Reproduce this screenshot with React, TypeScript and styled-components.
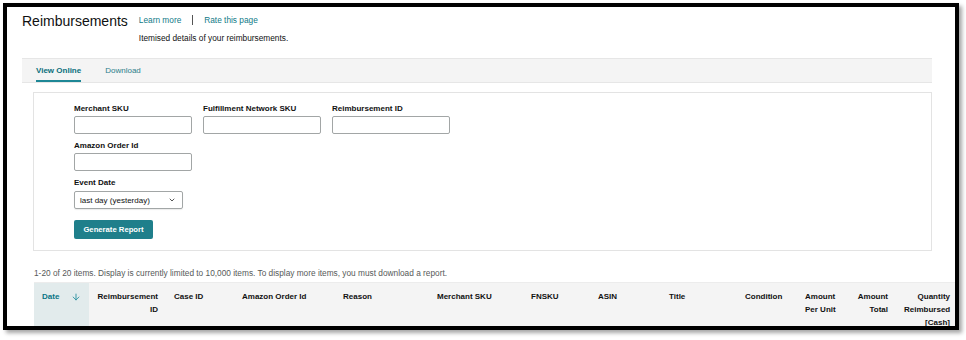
import styled, { createGlobalStyle } from "styled-components";
import { ArrowDown, ChevronDown } from "lucide-react";

const GlobalStyle = createGlobalStyle`
  html, body {
    margin: 0;
    padding: 0;
    background: #fff;
  }
  body {
    font-family: "Liberation Sans", Arial, sans-serif;
    color: #0f1111;
  }
`;

const Screen = styled.div`
  width: 966px;
  height: 340px;
  padding: 3px 0 0 3px;
  box-sizing: border-box;
  background: #fff;
  overflow: hidden;
`;

const Frame = styled.div`
  width: 956px;
  height: 327px;
  box-sizing: border-box;
  border: 4px solid #000;
  box-shadow: 3px 3px 4px rgba(0, 0, 0, 0.35);
  overflow: hidden;
  background: #fff;
`;

const Page = styled.div`
  padding: 7px 0 0 15px;
`;

const Header = styled.header`
  display: flex;
  align-items: flex-start;
`;

const Title = styled.h1`
  margin: 0;
  font-size: 14px;
  line-height: 14px;
  font-weight: 400;
  color: #0f1111;
`;

const HeaderText = styled.div`
  margin-left: 11px;
  display: flex;
  flex-direction: column;
`;

const LinkRow = styled.div`
  display: flex;
  align-items: center;
  height: 12px;
  font-size: 8.3px;
`;

const Link = styled.a`
  color: #0f7a87;
  text-decoration: none;
`;

const Divider = styled.span`
  width: 1px;
  height: 10px;
  background: #555;
  margin: 0 11px;
`;

const Subtitle = styled.p`
  margin: 6px 0 0;
  font-size: 8.3px;
  line-height: 12px;
  color: #0f1111;
`;

const TabBar = styled.nav`
  margin: 14px 23px 0 0;
  height: 25px;
  box-sizing: border-box;
  background: #f4f4f4;
  border-top: 1px solid #e6e6e6;
  border-bottom: 1px solid #e6e6e6;
  display: flex;
  gap: 24px;
  padding-left: 14px;
`;

const Tab = styled.a<{ $active?: boolean }>`
  padding-top: 7px;
  padding-bottom: 3px;
  line-height: 10px;
  font-size: 8px;
  font-weight: ${(p) => (p.$active ? 700 : 400)};
  color: ${(p) => (p.$active ? "#0a6f7c" : "#2c7e8a")};
  border-bottom: 2px solid ${(p) => (p.$active ? "#1e8796" : "transparent")};
`;

const Body = styled.div`
  padding-left: 11px;
`;

const Panel = styled.section`
  margin: 9px 23px 0 0;
  border: 1px solid #e3e3e3;
  padding: 10px 0 11px 40px;
`;

const FieldGrid = styled.div`
  display: grid;
  grid-template-columns: repeat(3, 118px);
  column-gap: 11px;
  row-gap: 6px;
`;

const Field = styled.label<{ $newRow?: boolean }>`
  display: flex;
  flex-direction: column;
  grid-column: ${(p) => (p.$newRow ? "1 / 2" : "auto")};
`;

const Label = styled.span`
  font-size: 8px;
  line-height: 12px;
  font-weight: 700;
  color: #111;
  margin-bottom: 1px;
`;

const Input = styled.input`
  height: 18px;
  width: 118px;
  box-sizing: border-box;
  border: 1px solid #a2a6a6;
  border-radius: 2px;
  margin: 0;
  padding: 0 4px;
`;

const Select = styled.div`
  width: 109px;
  height: 18px;
  margin-top: 1px;
  box-sizing: border-box;
  border: 1px solid #a2a6a6;
  border-radius: 2px;
  display: flex;
  align-items: center;
  justify-content: space-between;
  padding: 0 6px 0 5px;
  font-size: 8px;
  color: #0f1111;
  box-shadow: 0 1px 1px rgba(0, 0, 0, 0.08);
`;

const Button = styled.button`
  display: block;
  margin-top: 11px;
  width: 79px;
  height: 19px;
  border: 0;
  border-radius: 2px;
  background: #1f7f8b;
  color: #fff;
  font-family: "Liberation Sans", Arial, sans-serif;
  font-size: 7.7px;
  font-weight: 700;
  padding: 0;
`;

const Info = styled.p`
  margin: 16px 0 0 1px;
  font-size: 8.3px;
  line-height: 12px;
  color: #565959;
`;

const columns = "55px 77px 68px 101px 94px 94px 67px 71px 76px 60px 52px 47px 62px";

const HeadRow = styled.div`
  margin: 3px 0 0 1px;
  width: 924px;
  height: 60px;
  display: grid;
  grid-template-columns: ${columns};
  background: #f4f4f4;
  border-top: 1px solid #ececec;
`;

const HeadCell = styled.div<{ $right?: boolean; $sorted?: boolean }>`
  padding: 7px 8px 0;
  font-size: 8px;
  line-height: 13px;
  font-weight: 700;
  color: ${(p) => (p.$sorted ? "#0a7585" : "#111")};
  text-align: ${(p) => (p.$right ? "right" : "left")};
  background: ${(p) => (p.$sorted ? "#e2ebec" : "transparent")};
  display: ${(p) => (p.$sorted ? "flex" : "block")};
  justify-content: space-between;
  align-items: flex-start;
`;

const SortIcon = styled(ArrowDown)`
  margin-top: 2px;
`;

const headers: { label: string[]; right?: boolean }[] = [
  { label: ["Reimbursement", "ID"], right: true },
  { label: ["Case ID"] },
  { label: ["Amazon Order Id"] },
  { label: ["Reason"] },
  { label: ["Merchant SKU"] },
  { label: ["FNSKU"] },
  { label: ["ASIN"] },
  { label: ["Title"] },
  { label: ["Condition"] },
  { label: ["Amount", "Per Unit"] },
  { label: ["Amount", "Total"], right: true },
  { label: ["Quantity", "Reimbursed", "[Cash]"], right: true },
];

export default function App() {
  return (
    <>
      <GlobalStyle />
      <Screen>
        <Frame>
          <Page>
            <Header>
              <Title>Reimbursements</Title>
              <HeaderText>
                <LinkRow>
                  <Link>Learn more</Link>
                  <Divider />
                  <Link>Rate this page</Link>
                </LinkRow>
                <Subtitle>Itemised details of your reimbursements.</Subtitle>
              </HeaderText>
            </Header>

            <TabBar>
              <Tab $active>View Online</Tab>
              <Tab>Download</Tab>
            </TabBar>

            <Body>
              <Panel>
                <FieldGrid>
                  <Field>
                    <Label>Merchant SKU</Label>
                    <Input />
                  </Field>
                  <Field>
                    <Label>Fulfillment Network SKU</Label>
                    <Input />
                  </Field>
                  <Field>
                    <Label>Reimbursement ID</Label>
                    <Input />
                  </Field>
                  <Field>
                    <Label>Amazon Order Id</Label>
                    <Input />
                  </Field>
                  <Field $newRow>
                    <Label>Event Date</Label>
                    <Select>
                      <span>last day (yesterday)</span>
                      <ChevronDown size={8} strokeWidth={2.5} color="#333" />
                    </Select>
                  </Field>
                </FieldGrid>
                <Button>Generate Report</Button>
              </Panel>

              <Info>
                1-20 of 20 items. Display is currently limited to 10,000 items. To display more
                items, you must download a report.
              </Info>

              <HeadRow>
                <HeadCell $sorted>
                  <span>Date</span>
                  <SortIcon size={10} strokeWidth={2} color="#1a8a9a" />
                </HeadCell>
                {headers.map((h) => (
                  <HeadCell key={h.label.join(" ")} $right={h.right}>
                    {h.label.map((line) => (
                      <div key={line}>{line}</div>
                    ))}
                  </HeadCell>
                ))}
              </HeadRow>
            </Body>
          </Page>
        </Frame>
      </Screen>
    </>
  );
}
